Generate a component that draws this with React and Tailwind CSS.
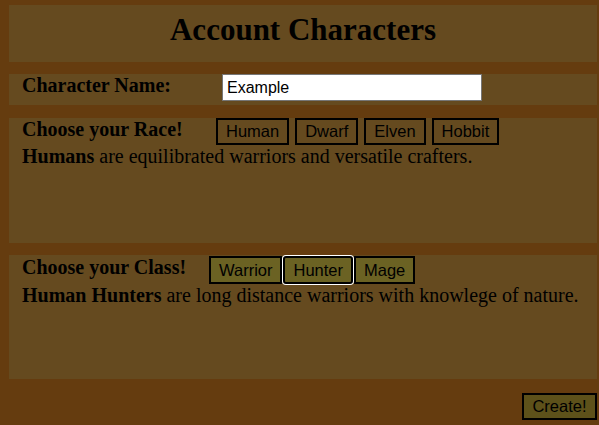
import React from "react";

export default function App() {
  const races = ["Human", "Dwarf", "Elven", "Hobbit"];
  const classes = ["Warrior", "Hunter", "Mage"];
  return (
    <div className="min-h-screen bg-[#653c0f] pt-[5px] pl-[9px] pr-[2px] text-black font-['Liberation_Serif',serif]">
      <div className="h-[57px] bg-[#654a1f] flex items-start justify-center pt-[9px]">
        <h1 className="text-[31px] font-bold leading-none">Account Characters</h1>
      </div>

      <div className="mt-[12px] h-[31px] bg-[#654a1f] flex items-start pl-[13px]">
        <div className="w-[200px] text-[20px] leading-[22px] font-bold">Character Name:</div>
        <input
          defaultValue="Example"
          className="w-[260px] h-[27px] bg-white border border-[#767676] px-[4px] text-[16px] text-black font-['Liberation_Sans',Arial,sans-serif] outline-none"
        />
      </div>

      <div className="mt-[13px] h-[125px] bg-[#654a1f] pl-[13px]">
        <div className="flex items-start">
          <div className="w-[194px] text-[20px] leading-[22px] font-bold">Choose your Race!</div>
          <div className="flex gap-[6px]">
            {races.map((r) => (
              <button
                key={r}
                className="h-[27px] px-[8px] border-2 border-black bg-transparent text-[16.5px] leading-none text-black font-['Liberation_Sans',Arial,sans-serif]"
              >
                {r}
              </button>
            ))}
          </div>
        </div>
        <p className="text-[20px] leading-[22px]">
          <b>Humans</b> are equilibrated warriors and versatile crafters.
        </p>
      </div>

      <div className="mt-[12px] h-[124px] bg-[#654a1f] pl-[13px] pt-[1px]">
        <div className="flex items-start">
          <div className="w-[187px] text-[20px] leading-[22px] font-bold">Choose your Class!</div>
          <div className="flex gap-[1px]">
            {classes.map((c) => (
              <button
                key={c}
                className={
                  "h-[28px] px-[8px] border-2 border-black bg-[#6b6223] text-[16.5px] leading-none text-black font-['Liberation_Sans',Arial,sans-serif] " +
                  (c === "Hunter" ? "rounded-[3px] ring-1 ring-white" : "")
                }
              >
                {c}
              </button>
            ))}
          </div>
        </div>
        <p className="text-[20px] leading-[22px]">
          <b>Human Hunters</b> are long distance warriors with knowlege of nature.
        </p>
      </div>

      <div className="flex justify-end mt-[14px]">
        <button className="h-[27px] w-[75px] border-2 border-black bg-[#5d511a] text-[16.5px] leading-none text-black font-['Liberation_Sans',Arial,sans-serif]">
          Create!
        </button>
      </div>
    </div>
  );
}
